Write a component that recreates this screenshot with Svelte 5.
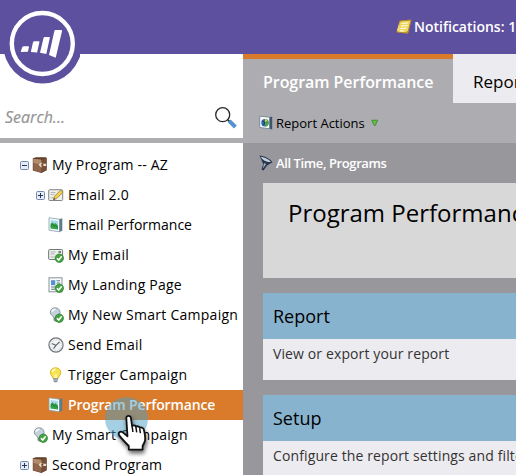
<script>
  const rows = [
    { label: 'My Program -- AZ', icon: 'program', level: 0, toggle: 'minus', ls: 0.19 },
    { label: 'Email 2.0', icon: 'draft', level: 1, toggle: 'plus', ls: 0.22 },
    { label: 'Email Performance', icon: 'report', level: 1, ls: 0 },
    { label: 'My Email', icon: 'email', level: 1, ls: 0.27 },
    { label: 'My Landing Page', icon: 'page', level: 1, ls: 0.23 },
    { label: 'My New Smart Campaign', icon: 'campaign', level: 1, ls: 0.27 },
    { label: 'Send Email', icon: 'clock', level: 1, ls: 0.27 },
    { label: 'Trigger Campaign', icon: 'bulb', level: 1, ls: 0.27 },
    { label: 'Program Performance', icon: 'report', level: 1, selected: true, ls: -0.14 },
    { label: 'My Smart Campaign', icon: 'campaign', level: 0, ls: 0.24 },
    { label: 'Second Program', icon: 'program', level: 0, toggle: 'plus', ls: 0.15 }
  ];
  const cards = [
    { title: 'Report', text: 'View or export your report' },
    { title: 'Setup', text: 'Configure the report settings and filters' }
  ];
</script>

{#snippet check()}
  <circle cx="11.3" cy="11.2" r="4.2" fill="#45a344" stroke="#267b2b" stroke-width=".7" />
  <path d="M9 11.2l1.7 1.8 3-3.7" fill="none" stroke="#fff" stroke-width="1.5" />
{/snippet}

{#snippet icon(name)}
  <svg class="icon" viewBox="0 0 16 16">
    {#if name === 'program'}
      <path d="M.8 1.3L4 .2h10l.8 1v12L9.5 16 .8 13.6z" fill="#5d3c28" />
      <path d="M1.3 1.8l8.2 1v12.6l-8.2-2.2z" fill="#91654a" />
      <path d="M1.3 1.8l8.2 1v4.7L1.3 6z" fill="#b28b6d" />
      <path d="M9.5 2.8l4.5-1.9v12l-4.5 2.5z" fill="#765039" />
      <path d="M6.5 7.8l3-2.6v1.6h4.7v2.3H9.5v1.6z" fill="#ecdcc8" />
      <path d="M9.3 7h2v1.8h-2z" fill="#63412d" />
    {:else if name === 'draft'}
      <rect x=".7" y="2.7" width="14" height="10.8" rx="1" fill="#eeeeec" stroke="#858585" />
      <path d="M2.5 5.5h5M2.5 7.5h4M2.5 10.8h4" stroke="#b8b8b8" />
      <path d="M5.5 12.5l1-3.2 6.2-6.2 2.3 2.1-6.3 6.3z" fill="#f1d34c" stroke="#8c7228" stroke-width=".7" />
      <path d="M5.2 13l.9-2.1 1.3 1.3z" fill="#443d31" />
    {:else if name === 'report'}
      <path d="M1 .8l10.5 1.4v12.6L1 13.2z" fill="#f6fafb" stroke="#849eaa" stroke-width=".8" />
      <path d="M11.5 2l2.8-.7v12.4l-2.8 1.4z" fill="#5c7d8c" />
      <path d="M2.6 3.1l7.4 1v8.4l-7.4-1z" fill="#a8d8ec" />
      <path d="M2.6 7l1.8-1.8 1.8 1.7 1.2-1L10 8.6v3.9l-7.4-1z" fill="#35a148" />
      <path d="M2.8 9.3l1.7-2 2 2.3 1-1.2L10 11" fill="none" stroke="#1b702f" stroke-width=".8" />
    {:else if name === 'email'}
      <rect x=".6" y="2.5" width="14" height="10" rx="1" fill="#ececea" stroke="#727a77" />
      <path d="M2.5 5h5M2.5 7h4M2.5 10h4" stroke="#adb5b5" />
      <path d="M10.5 4h2.5v2h-2.5z" fill="#71836f" />
      {@render check()}
    {:else if name === 'page'}
      <rect x="1" y=".8" width="13" height="14" fill="#fafcfc" stroke="#859299" />
      <path d="M3 3.2h4.3v5H3z" fill="#548fd1" />
      <path d="M8.5 3.8H12M8.5 6H12M3 10h4M3 12.3h4" stroke="#647986" stroke-width="1.1" />
      {@render check()}
    {:else if name === 'campaign'}
      <path d="M7 .8c3 0 5 2 5 4.6 0 2.6-2 3.5-2 6v2l-2 1-2-1v-2c0-2.5-3.7-3.2-3.7-6C2.3 2.6 4.2.8 7 .8z" fill="#c4d2dc" stroke="#8796a1" />
      <path d="M4 4.9C4.5 3 5.8 2.2 7.5 2.3" fill="none" stroke="#f3f8fa" stroke-width="1.6" />
      <path d="M6 11.4h4M6 13h4" stroke="#65727a" />
      {@render check()}
    {:else if name === 'clock'}
      <circle cx="8" cy="8" r="7.1" fill="#f0f2f3" stroke="#73787c" stroke-width="1.2" />
      <circle cx="8" cy="8" r="5.4" fill="none" stroke="#c5cbce" stroke-width="1" stroke-dasharray="1 1.8" />
      <path d="M3.8 6.5L8 8.4l3.6-3.6M8 8.4l-2.5 3.2" fill="none" stroke="#555e65" stroke-width="1.1" />
    {:else if name === 'bulb'}
      <path d="M7.5.8c3.2 0 5.2 2.1 5.2 4.8 0 2.8-2.5 3.8-2.7 6H5.1c-.2-2.2-2.7-3.2-2.7-6C2.4 2.9 4.4.8 7.5.8z" fill="#f8e34f" stroke="#d6b631" />
      <path d="M4.5 5c.2-1.8 1.4-2.7 3-2.7" fill="none" stroke="#fffbc5" stroke-width="1.8" />
      <path d="M6.5 7l1 .7L9 7v4H6.5z" fill="#fff5a4" />
      <path d="M5.3 11h4.6v3l-1.3 1.3h-2L5.3 14z" fill="#7d878e" />
      <path d="M5.3 12h4.6M5.3 13.5h4.6" stroke="#d2d5d5" stroke-width=".7" />
    {/if}
  </svg>
{/snippet}

<div class="app">
  <header>
    <svg class="logo" viewBox="0 0 80 86">
      <circle cx="42.5" cy="44" r="39.5" fill="#5d509e" />
      <circle cx="42.3" cy="43.5" r="30.5" fill="none" stroke="#fff" stroke-width="4.4" />
      <g fill="#fff">
        <path d="M22.3 47.1q.5-.9 1.5-.9h4.3q1 0 .8 1l-1 4.5-7.2.3z" />
        <path d="M33 42.2q.4-1 1.4-1h4.3q1 0 .7 1l-2.3 10.4-6.3-.7z" />
        <path d="M43.5 38.1q.4-1 1.3-1h4.4q.9 0 .6 1l-3.5 15.8-6.3-1.1z" />
        <path d="M54.3 31.3q.3-1.2 1.4-1.2h5.4q1.2 0 .9 1.2l-6.3 26.5-6.7-2.9z" />
      </g>
    </svg>
    <div class="notifications">
      <svg viewBox="0 0 16 16">
        <path d="M4 2l11-1-3.2 13.2L1 13z" fill="#efd65c" stroke="#b58b2b" />
        <path d="M1.2 11L4 2 2 12.8z" fill="#fff1a0" />
        <path d="M5.7 4.5l6.5-.5M5 7l6.5-.4M4.3 9.5l6-.2M3.8 11.8l4 .1" stroke="#fffbe1" stroke-width="1.2" />
        <path d="M9 13.7l2.8.5.7-2.7z" fill="#b98c25" />
      </svg>
      <span>Notifications: 1</span>
    </div>
  </header>
  <div class="columns">
    <aside>
      <div class="search">
        <span>Search...</span>
        <svg viewBox="0 0 24 24">
          <circle cx="8.7" cy="8.7" r="7" fill="#fff" stroke="#26292b" stroke-width="1.3" />
          <path d="M13.8 13.8l1.6 1.6" stroke="#26292b" stroke-width="1.8" />
          <path d="M15.2 14.8l6.2 6.2" stroke="#5593d0" stroke-width="4" />
        </svg>
      </div>
      <div class="tree">
        {#each rows as row}
          <div class="row" class:child={row.level === 1} class:selected={row.selected}>
            <span class="toggle">
              {#if row.toggle}
                <svg viewBox="0 0 9 9">
                  <rect x=".5" y=".5" width="8" height="8" rx="1" fill="#e5ebf7" stroke="#7588ae" />
                  <path d={row.toggle === 'plus' ? 'M2 4.5h5M4.5 2v5' : 'M2 4.5h5'} stroke="#28365c" />
                </svg>
              {/if}
            </span>
            {@render icon(row.icon)}
            <span class="label" style="letter-spacing: {row.ls}px">{row.label}</span>
          </div>
        {/each}
      </div>
    </aside>
    <main>
      <div class="top">
        <div class="tabs">
          <div class="tab active"><span>Program Performance</span></div>
          <div class="tab"><span>Report</span></div>
        </div>
        <div class="actions">
          <svg class="small" viewBox="0 0 14 16">
            <path d="M.7 1.2l10 1v11.6l-10-1.3z" fill="#f8fafb" stroke="#7c8b98" />
            <path d="M10.7 2.2l2.5-.7v13l-2.5-.7z" fill="#3c586c" />
            <circle cx="5.9" cy="7.7" r="3.7" fill="#2c6eaf" />
            <path d="M6 4a3.7 3.7 0 0 1 0 7.4z" fill="#4f9f41" />
            <path d="M3 5.6l3 2-2 3" stroke="#193c72" fill="none" />
            <path d="M6 4l2.6 1L6 7.6z" fill="#edc34c" />
          </svg>
          <span>Report Actions</span>
          <svg class="arrow" viewBox="0 0 8 8"><path d="M.7 1.2h6L4.3 6.5H3.2z" fill="#65bb46" stroke="#348a2e" stroke-width=".8" /></svg>
        </div>
      </div>
      <div class="body">
        <div class="filter">
          <svg class="small" viewBox="0 0 14 16">
            <path d="M.5.6C5 .8 11.5 4 13.5 7.3L8 10.5l-3.5 5-2-1L4.2 9z" fill="#26334d" />
            <path d="M1.8 1.7c4 .5 8.5 3 10.3 5.3-3.8.5-8.5-1.7-10.3-5.3z" fill="#c3cfdb" />
            <path d="M5 8l2.2 1-3.4 4.8z" fill="#a1b0c1" />
          </svg>
          <span>All Time, Programs</span>
        </div>
        <div class="title">Program Performance</div>
        {#each cards as card}
          <section>
            <h2>{card.title}</h2>
            <p>{card.text}</p>
          </section>
        {/each}
      </div>
    </main>
  </div>
  <div class="halo"></div>
  <svg class="hand" viewBox="0 0 34 42">
    <path d="M11.3 4.8c0-2.6 4.2-2.6 4.6 0l1.2 8.4c1-1.2 3.3-1 3.8.6 1.2-1 3.4-.6 3.8 1 1.7-.8 3.7 0 4.2 2 .8 3.6 2.2 8.8.7 12.2l-2 4v3.6H13.8V33c-3-3-6.7-6.7-9.6-10.6-1.7-2.7 1.2-4.8 3.6-3l4.7 3.8z" fill="#fff" stroke="#111" stroke-width="1.8" stroke-linejoin="round" />
    <path d="M17.1 13.2l.8 5.8M20.9 14l.8 5.4M24.7 15.5l.7 4.6" fill="none" stroke="#111" stroke-width="1.5" />
  </svg>
</div>

<style>
  .app {
    position: relative;
    width: 516px;
    height: 475px;
    overflow: hidden;
    display: flex;
    flex-direction: column;
    font: 14px/20px 'Open Sans', 'Noto Sans', sans-serif;
    color: #000;
    white-space: nowrap;
  }
  header {
    position: relative;
    z-index: 2;
    height: 54px;
    flex: none;
    background: #5d509e;
    display: flex;
    justify-content: flex-end;
  }
  .logo { position: absolute; left: 0; top: 0; width: 80px; height: 86px; }
  .notifications {
    display: flex;
    align-items: center;
    width: 120px;
    color: #fff;
    font-size: 14px;
    font-weight: 600;
  }
  .notifications svg { width: 16px; height: 16px; margin-right: 2px; flex: none; }
  .columns { display: flex; flex: 1; min-height: 0; }
  aside { width: 243px; flex: none; background: #fff; }
  .search {
    height: 89px;
    box-sizing: border-box;
    border-bottom: 5px solid #adadb0;
    display: flex;
    justify-content: space-between;
    align-items: flex-end;
    padding: 0 5px 8px;
  }
  .search span { font-size: 16px; line-height: 26px; font-style: italic; color: #969696; -webkit-text-stroke: .2px #969696; }
  .search svg { width: 24px; height: 24px; }
  .tree { padding-top: 7px; }
  .row { display: flex; align-items: center; height: 30px; padding-left: 20px; }
  .child { padding-left: 36px; }
  .toggle { width: 12px; height: 9px; display: flex; }
  .toggle svg { width: 9px; height: 9px; }
  .icon { width: 16px; height: 16px; margin-right: 4px; flex: none; }
  .selected { background: #d97b2b; color: #fff; font-weight: 600; }
  main { flex: 1; min-width: 0; display: flex; flex-direction: column; }
  .top { height: 89px; background: #adadb1; }
  .tabs { display: flex; height: 49px; }
  .tab {
    box-sizing: border-box;
    flex: none;
    padding: 16px 20px 0;
    background: #ecebf0;
    font-size: 17px;
    line-height: 24px;
  }
  .active {
    width: 210px;
    padding-top: 11px;
    border-top: 5px solid #d97b2b;
    background: #adadb1;
    color: #fff;
    font-size: 16px;
    font-weight: 600;
    letter-spacing: -.05px;
  }
  .actions { display: flex; align-items: center; height: 40px; padding-left: 16px; font-size: 13px; }
  .small { width: 14px; height: 16px; margin-right: 3px; flex: none; }
  .arrow { width: 8px; height: 8px; margin-left: 6px; }
  .body { flex: 1; background: #98979c; padding-left: 20px; }
  .filter { display: flex; align-items: center; height: 40px; margin-left: -4px; color: #fff; font-size: 13px; font-weight: 600; letter-spacing: -.4px; }
  .title { height: 95px; box-sizing: border-box; padding: 14px 25px; background: #d8d8d8; font-size: 24px; line-height: 32px; }
  section { height: 87px; margin-top: 15px; background: #ecebf0; }
  h2 { margin: 0; height: 46px; padding-left: 10px; background: #88b3ce; font-size: 18px; font-weight: 400; line-height: 46px; }
  p { margin: 0; padding: 5px 10px; color: #333; letter-spacing: .12px; }
  .halo { position: absolute; left: 105px; top: 397px; width: 43px; height: 43px; border-radius: 50%; background: rgba(75, 160, 199, .5); }
  .hand { position: absolute; left: 115px; top: 413px; width: 34px; height: 42px; filter: drop-shadow(1px 3px 2px rgba(0, 0, 0, .6)); }
</style>
